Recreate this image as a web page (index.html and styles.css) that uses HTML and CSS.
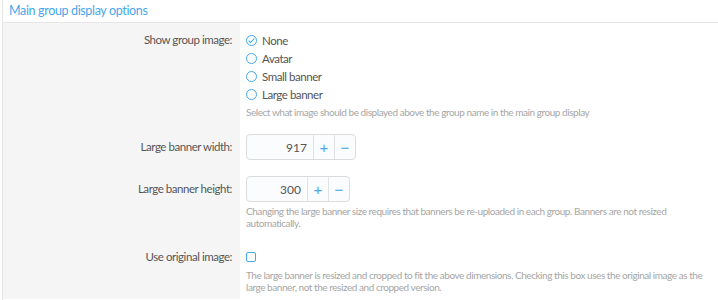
FILE: index.html
```html
<!DOCTYPE html>
<html lang="en">
<head>
    <meta charset="UTF-8">
    <title>Group options</title>
    <link rel="stylesheet" href="styles.css">
</head>
<body>
    <div class="block">
        <h2 class="block-header">Main group display options</h2>
        <div class="block-body">
            <dl class="formRow">
                <dt>Show group image:</dt>
                <dd>
                    <ul class="choices">
                        <li><span class="radio checked"></span>None</li>
                        <li><span class="radio"></span>Avatar</li>
                        <li><span class="radio"></span>Small banner</li>
                        <li><span class="radio"></span>Large banner</li>
                    </ul>
                    <div class="hint">Select what image should be displayed above the group name in the main group display</div>
                </dd>
            </dl>
            <dl class="formRow">
                <dt class="tall">Large banner width:</dt>
                <dd>
                    <div class="numBox">
                        <input type="text" class="num" value="917">
                        <button class="step">+</button>
                        <button class="step">&minus;</button>
                    </div>
                </dd>
            </dl>
            <dl class="formRow">
                <dt class="tall">Large banner height:</dt>
                <dd>
                    <div class="numBox">
                        <input type="text" class="num short" value="300">
                        <button class="step">+</button>
                        <button class="step">&minus;</button>
                    </div>
                    <div class="hint">Changing the large banner size requires that banners be re-uploaded in each group. Banners are not resized automatically.</div>
                </dd>
            </dl>
            <dl class="formRow last">
                <dt>Use original image:</dt>
                <dd>
                    <div class="check"><span class="box"></span></div>
                    <div class="hint">The large banner is resized and cropped to fit the above dimensions. Checking this box uses the original image as the large banner, not the resized and cropped version.</div>
                </dd>
            </dl>
        </div>
    </div>
</body>
</html>
```

FILE: styles.css
```css
:root {
    --blue: #47a7eb;
    --text: #555;
    --muted: #a6a6a6;
    --line: #e6e6e6;
    --side: #f5f5f5;
}
body {
    margin: 0;
    font-family: Lato, "Liberation Sans", sans-serif;
    color: var(--text);
    background: #fff;
}
.block {
    margin-left: 2px;
    border-left: 1px solid var(--line);
    height: 300px;
}
.block-header {
    margin: 0;
    padding: 3px 6px 0;
    height: 19px;
    font-size: 12.5px;
    letter-spacing: -0.35px;
    font-weight: normal;
    color: var(--blue);
    border-bottom: 1px solid var(--line);
}
.block-body {
    background: linear-gradient(to right, var(--side) 237px, #fff 237px);
    height: 276px;
}
.formRow {
    display: flex;
    margin: 0;
    padding: 8px 0;
}
.formRow.last {
    padding-top: 11px;
}
.formRow dt {
    width: 229px;
    padding-right: 8px;
    text-align: right;
    font-size: 11.5px;
    letter-spacing: -0.45px;
    line-height: 18px;
    flex-shrink: 0;
}
.formRow dt.tall {
    line-height: 26px;
}
.formRow dd {
    margin: 0;
    padding-left: 6px;
    padding-right: 8px;
}
.choices {
    list-style: none;
    margin: 0;
    padding: 0;
}
.choices li {
    display: flex;
    align-items: center;
    height: 18px;
    font-size: 11.5px;
    letter-spacing: -0.45px;
}
.radio {
    width: 9px;
    height: 9px;
    border: 1px solid var(--blue);
    border-radius: 50%;
    margin-right: 5px;
    position: relative;
}
.radio.checked::after {
    content: "";
    position: absolute;
    left: 3px;
    top: 1px;
    width: 2px;
    height: 5px;
    border: solid var(--blue);
    border-width: 0 1px 1px 0;
    transform: rotate(45deg);
}
.hint {
    margin-top: 3px;
    font-size: 10px;
    letter-spacing: -0.45px;
    line-height: 12px;
    color: var(--muted);
}
.numBox {
    display: inline-flex;
    height: 26px;
    border: 1px solid #dcdcdc;
    border-radius: 4px;
    background: #fafcfe;
    box-sizing: border-box;
}
.num {
    width: 54px;
    border: none;
    background: transparent;
    text-align: right;
    font: 12px Lato, sans-serif;
    color: var(--text);
    padding: 0 6px;
}
.num.short {
    width: 48px;
}
.step {
    width: 21px;
    border: none;
    border-left: 1px solid #e2e2e2;
    background: transparent;
    color: var(--blue);
    font-size: 15px;
    padding: 0;
    line-height: 1;
}
.check {
    height: 18px;
    display: flex;
    align-items: center;
}
.box {
    width: 8px;
    height: 8px;
    border: 1px solid var(--blue);
    border-radius: 2px;
}
```
